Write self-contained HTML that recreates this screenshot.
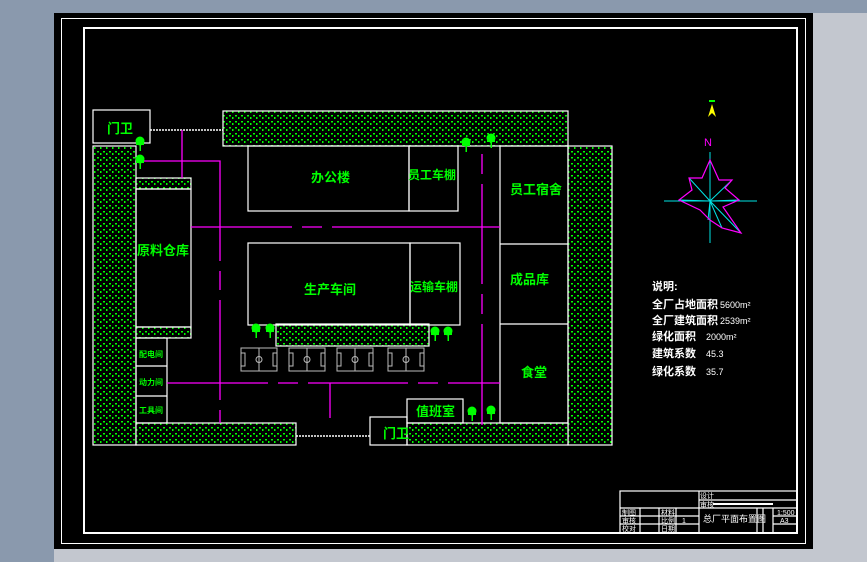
<!DOCTYPE html>
<html><head><meta charset="utf-8"><style>
html,body{margin:0;padding:0;background:#c3c7cf;width:867px;height:562px;overflow:hidden}
svg{display:block}
.g{font-family:"Liberation Sans","WenQuanYi Zen Hei","Noto Sans CJK SC",sans-serif;fill:#00ff00;font-weight:bold}
.w{font-family:"Liberation Sans","WenQuanYi Zen Hei","Noto Sans CJK SC",sans-serif;fill:#fff}
</style></head><body>
<svg width="867" height="562" viewBox="0 0 867 562" xmlns="http://www.w3.org/2000/svg">
<defs>
<pattern id="h" width="6" height="6" patternUnits="userSpaceOnUse">
<rect width="6" height="6" fill="#000"/>
<rect x="1" y="1" width="2" height="1.5" fill="#00ff00"/>
<rect x="4" y="3" width="1.5" height="2" fill="#00ff00"/>
</pattern>
<g id="t"><circle cx="0" cy="-4" r="4.5" fill="#00ff00"/><rect x="-4" y="-6" width="8" height="6" fill="#00ff00"/><rect x="-0.5" y="0" width="1.5" height="6" fill="#00ff00"/></g>
<g id="f"><rect x="0" y="0" width="36" height="23" fill="none" stroke="#bbb" stroke-width="1"/><line x1="18" y1="0" x2="18" y2="23" stroke="#bbb"/><circle cx="18" cy="11.5" r="3" fill="none" stroke="#bbb"/><rect x="0" y="5" width="4" height="13" fill="none" stroke="#bbb"/><rect x="32" y="5" width="4" height="13" fill="none" stroke="#bbb"/></g>
</defs>
<rect x="0" y="0" width="867" height="562" fill="#c3c7cf"/>
<rect x="0" y="0" width="54" height="562" fill="#8a99ad"/>
<rect x="0" y="0" width="867" height="13" fill="#8a99ad"/>
<rect x="54" y="13" width="759" height="536" fill="#000"/>
<rect x="61.5" y="18.5" width="744" height="525" fill="none" stroke="#fff" stroke-width="1"/>
<rect x="84" y="28" width="713" height="505" fill="none" stroke="#fff" stroke-width="2"/>

<g stroke="#fff" stroke-width="1.2" fill="url(#h)">
<rect x="223" y="111" width="345" height="35"/>
<rect x="93" y="146" width="43" height="299"/>
<rect x="136" y="423" width="160" height="22"/>
<rect x="568" y="146" width="44" height="299"/>
<rect x="407" y="423" width="161" height="22"/>
<rect x="136" y="178" width="55" height="11"/>
<rect x="136" y="327" width="55" height="11"/>
<rect x="276" y="324" width="153" height="22"/>
</g>
<g stroke="#fff" stroke-width="1.2" fill="none">
<rect x="93" y="110" width="57" height="33"/>
<rect x="136" y="189" width="55" height="138"/>
<rect x="136" y="338" width="31" height="85"/>
<line x1="136" y1="366" x2="167" y2="366"/><line x1="136" y1="396" x2="167" y2="396"/>
<rect x="248" y="146" width="161" height="65"/>
<rect x="409" y="146" width="49" height="65"/>
<rect x="248" y="243" width="162" height="82"/>
<rect x="410" y="243" width="50" height="82"/>
<rect x="500" y="146" width="68" height="277"/>
<line x1="500" y1="244" x2="568" y2="244"/><line x1="500" y1="324" x2="568" y2="324"/>
<rect x="407" y="399" width="56" height="24"/>
<rect x="370" y="417" width="37" height="28"/>
</g>
<line x1="150" y1="130" x2="223" y2="130" stroke="#fff" stroke-width="1.5" stroke-dasharray="2 1"/>
<line x1="296" y1="436" x2="370" y2="436" stroke="#fff" stroke-width="1.5" stroke-dasharray="2 1"/>

<g stroke="#ff00ff" stroke-width="1.3" fill="none">
<line x1="182" y1="130" x2="182" y2="178"/>
<polyline points="142,161 220,161 220,261"/>
<line x1="220" y1="271" x2="220" y2="290"/>
<line x1="191" y1="227" x2="292" y2="227"/><line x1="302" y1="227" x2="322" y2="227"/><line x1="332" y1="227" x2="500" y2="227"/>
<line x1="167" y1="383" x2="268" y2="383"/><line x1="278" y1="383" x2="298" y2="383"/><line x1="308" y1="383" x2="408" y2="383"/><line x1="418" y1="383" x2="438" y2="383"/><line x1="448" y1="383" x2="500" y2="383"/>
<line x1="220" y1="300" x2="220" y2="400"/><line x1="220" y1="410" x2="220" y2="423"/>
<line x1="330" y1="383" x2="330" y2="418"/>
<line x1="482" y1="154" x2="482" y2="174"/><line x1="482" y1="184" x2="482" y2="284"/><line x1="482" y1="294" x2="482" y2="314"/><line x1="482" y1="324" x2="482" y2="425"/>
</g>

<use href="#t" x="140" y="145"/><use href="#t" x="140" y="163"/>
<use href="#t" x="466" y="146"/><use href="#t" x="491" y="142"/>
<use href="#t" x="256" y="332"/><use href="#t" x="270" y="332"/>
<use href="#t" x="435" y="335"/><use href="#t" x="448" y="335"/>
<use href="#t" x="472" y="415"/><use href="#t" x="491" y="414"/>
<use href="#f" x="241" y="348"/><use href="#f" x="289" y="348"/><use href="#f" x="337" y="348"/><use href="#f" x="388" y="348"/>

<g class="g" font-size="13">
<text x="107" y="133">门卫</text>
<text x="383" y="438">门卫</text>
<text x="311" y="182">办公楼</text>
<text x="408" y="179" font-size="12">员工车棚</text>
<text x="510" y="194">员工宿舍</text>
<text x="137" y="255">原料仓库</text>
<text x="304" y="294">生产车间</text>
<text x="410" y="291" font-size="12">运输车棚</text>
<text x="510" y="284">成品库</text>
<text x="521" y="377">食堂</text>
<text x="416" y="416">值班室</text>
<text x="139" y="357" font-size="8">配电间</text>
<text x="139" y="385" font-size="8">动力间</text>
<text x="139" y="413" font-size="8">工具间</text>
</g>

<rect x="709" y="100" width="6" height="2" fill="#00ff00"/>
<polygon points="712,104 708,117 712,113 716,117" fill="#ffff00"/>
<text x="704" y="146" font-family="Liberation Sans,sans-serif" font-size="11" fill="#ff00ff">N</text>
<g stroke="#00e5e5" stroke-width="1">
<line x1="664" y1="201" x2="757" y2="201"/><line x1="710" y1="152" x2="710" y2="243"/>
<line x1="710" y1="201" x2="689" y2="178"/><line x1="710" y1="201" x2="732" y2="180"/>
<line x1="710" y1="201" x2="741" y2="233"/><line x1="710" y1="201" x2="722" y2="228"/>
<line x1="710" y1="201" x2="708" y2="220"/><line x1="710" y1="201" x2="679" y2="200"/>
<line x1="710" y1="201" x2="739" y2="200"/><line x1="710" y1="201" x2="710" y2="160"/>
</g>
<polygon points="710,160 719,180 732,180 725,188 739,200 723,207 741,233 722,228 710,220 700,210 679,200 692,190 689,178 702,178" fill="none" stroke="#ff00ff" stroke-width="1.2"/>

<g class="w" font-size="11">
<text x="652" y="290" font-weight="bold">说明:</text>
<text x="652" y="308" font-weight="bold">全厂占地面积</text><text x="720" y="308" font-size="9">5600m²</text>
<text x="652" y="324" font-weight="bold">全厂建筑面积</text><text x="720" y="324" font-size="9">2539m²</text>
<text x="652" y="340" font-weight="bold">绿化面积</text><text x="706" y="340" font-size="9">2000m²</text>
<text x="652" y="357" font-weight="bold">建筑系数</text><text x="706" y="357" font-size="9">45.3</text>
<text x="652" y="375" font-weight="bold">绿化系数</text><text x="706" y="375" font-size="9">35.7</text>
</g>

<g stroke="#fff" stroke-width="1.2" fill="none">
<rect x="620" y="491" width="177" height="42"/>
<line x1="620" y1="508" x2="797" y2="508"/>
<line x1="699" y1="491" x2="699" y2="533"/>
<line x1="699" y1="500" x2="797" y2="500"/>
<line x1="620" y1="516" x2="699" y2="516"/><line x1="620" y1="524" x2="699" y2="524"/>
<line x1="640" y1="508" x2="640" y2="533"/><line x1="659" y1="508" x2="659" y2="533"/><line x1="676" y1="508" x2="676" y2="533"/>
<line x1="757" y1="508" x2="757" y2="533"/><line x1="763" y1="508" x2="763" y2="533"/><line x1="773" y1="508" x2="773" y2="533"/>
<line x1="773" y1="516" x2="797" y2="516"/><line x1="773" y1="524" x2="797" y2="524"/>
</g>
<g class="w" font-size="7">
<text x="700" y="498">设计</text>
<text x="700" y="507">审核</text><rect x="713" y="503" width="60" height="2" fill="#fff"/>
<text x="622" y="515">制图</text><text x="661" y="515">材料</text>
<text x="622" y="523">审核</text><text x="661" y="523">比例</text><text x="682" y="523">1</text>
<text x="622" y="531">校对</text><text x="661" y="531">日期</text>
<text x="703" y="522" font-size="9">总厂平面布置图</text>
<text x="777" y="515">1:500</text><text x="780" y="523">A3</text>
</g>
</svg>
</body></html>
